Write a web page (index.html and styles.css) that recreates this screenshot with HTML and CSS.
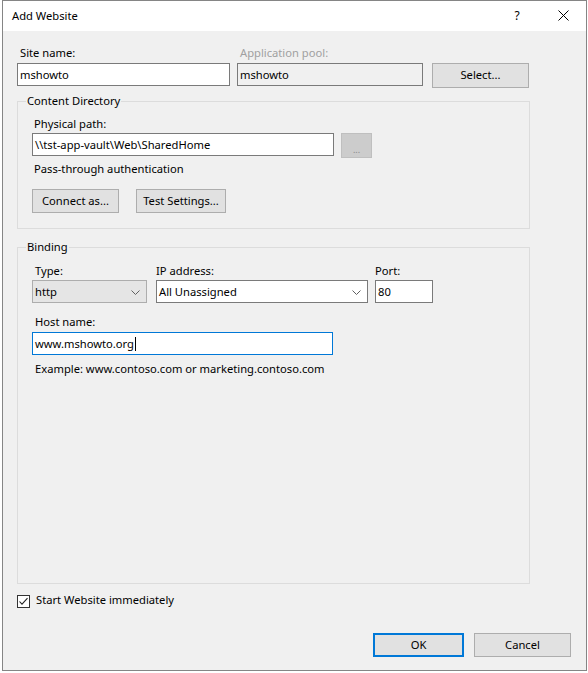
FILE: index.html
```html
<!DOCTYPE html>
<html>
<head>
<meta charset="utf-8">
<title>Add Website</title>
<link rel="stylesheet" href="styles.css">
</head>
<body>
<div class="dialog">
  <div class="titlebar">
    <span class="title">Add Website</span>
    <span class="help">?</span>
    <span class="close"><svg width="11" height="11" viewBox="0 0 11 11"><path d="M0.5 0.5L10.5 10.5M10.5 0.5L0.5 10.5" stroke="#000" stroke-width="1" fill="none"/></svg></span>
  </div>
  <div class="body">
    <div class="row-top">
      <div class="f-site">
        <div class="lbl lbl-top">Site name:</div>
        <div class="tb">mshowto</div>
      </div>
      <div class="f-pool">
        <div class="lbl lbl-top disabled">Application pool:</div>
        <div class="tb ro">mshowto</div>
      </div>
      <button class="btn btn-select">Select...</button>
    </div>

    <fieldset class="group group-content">
      <legend>Content Directory</legend>
      <div class="content-inner">
        <div class="lbl lbl-path">Physical path:</div>
        <div class="path-row">
          <div class="tb tb-path">\\tst-app-vault\Web\SharedHome</div>
          <button class="btn btn-browse" disabled>...</button>
        </div>
        <div class="text passthru">Pass-through authentication</div>
        <div class="btn-row">
          <button class="btn btn-connect">Connect as...</button>
          <button class="btn btn-test">Test Settings...</button>
        </div>
      </div>
    </fieldset>

    <fieldset class="group group-binding">
      <legend>Binding</legend>
      <div class="binding-inner">
        <div class="bind-row">
          <div class="col-type">
            <div class="lbl lbl-bind ind3">Type:</div>
            <div class="combo combo-type"><span class="combo-text">http</span><svg class="chev" width="9" height="5" viewBox="0 0 9 5"><path d="M0.5 0.5L4.5 4.5L8.5 0.5" stroke="#606060" fill="none"/></svg></div>
          </div>
          <div class="col-ip">
            <div class="lbl lbl-bind">IP address:</div>
            <div class="combo"><span class="combo-text">All Unassigned</span><svg class="chev" width="9" height="5" viewBox="0 0 9 5"><path d="M0.5 0.5L4.5 4.5L8.5 0.5" stroke="#606060" fill="none"/></svg></div>
          </div>
          <div class="col-port">
            <div class="lbl lbl-bind">Port:</div>
            <div class="tb">80</div>
          </div>
        </div>
        <div class="lbl lbl-host ind3">Host name:</div>
        <div class="tb tb-host">www.mshowto.org<span class="caret"></span></div>
        <div class="text example ind3">Example: www.contoso.com or marketing.contoso.com</div>
      </div>
    </fieldset>

    <div class="check-row">
      <svg class="checkbox" width="13" height="13" viewBox="0 0 13 13"><rect x="0.5" y="0.5" width="12" height="12" fill="#fff" stroke="#333"/><path d="M2.5 6.5L5 9.2L10.5 3.2" stroke="#222" stroke-width="1.1" fill="none"/></svg>
      <span class="check-label">Start Website immediately</span>
    </div>

    <div class="footer">
      <button class="btn btn-ok">OK</button>
      <button class="btn btn-cancel">Cancel</button>
    </div>
  </div>
</div>
</body>
</html>
```

FILE: styles.css
```css
* {
  box-sizing: border-box;
}

html,
body {
  margin: 0;
  background: #ffffff;
}

body {
  font-family: "Noto Sans", "DejaVu Sans", sans-serif;
  font-size: 11.2px;
  color: #000000;
}

.dialog {
  margin-left: 2px;
  width: 585px;
  height: 671px;
  border: 1px solid #858585;
  background: #f0f0f0;
  display: flex;
  flex-direction: column;
}

.titlebar {
  flex: none;
  height: 30px;
  background: #ffffff;
  display: flex;
  align-items: center;
  padding-left: 9px;
  padding-bottom: 2px;
}

.title {
  flex: 1;
}

.help {
  width: 12px;
  text-align: center;
  font-size: 12px;
  margin-right: 35px;
}

.close {
  width: 11px;
  height: 11px;
  margin-right: 17px;
  display: flex;
}

.body {
  flex: 1;
  display: flex;
  flex-direction: column;
  padding: 14px 15px 13px 14px;
  min-height: 0;
}

.lbl {
  line-height: 15px;
  height: 15px;
  white-space: nowrap;
  padding-left: 3px;
}

.lbl-top {
  margin-bottom: 3px;
}

.disabled {
  color: #a0a0a0;
}

.row-top {
  display: flex;
  align-items: flex-start;
}

.f-site {
  width: 213px;
}

.f-pool {
  width: 186px;
  margin-left: 7px;
}

.tb {
  height: 23px;
  border: 1px solid #7a7a7a;
  background: #ffffff;
  line-height: 21px;
  padding-left: 2px;
  white-space: nowrap;
  overflow: hidden;
}

.tb.ro {
  background: #f0f0f0;
}

.btn {
  font: inherit;
  color: #000000;
  background: #e1e1e1;
  border: 1px solid #adadad;
  padding: 0 0 2px 0;
  height: 24px;
  margin: 0;
}

.btn-select {
  width: 97px;
  height: 25px;
  margin-top: 18px;
  margin-left: 9px;
}

.group {
  margin: 0;
  padding: 0;
  border: 1px solid #dcdcdc;
  width: 513px;
  min-width: 0;
}

.group legend {
  padding: 0 1px 2px 1px;
  margin-left: 8px;
  line-height: 13px;
}

.group-content {
  margin-top: 6px;
}

.content-inner {
  padding: 7px 14px 15px 14px;
}

.lbl-path {
  padding-left: 2px;
  margin-bottom: 2px;
}

.path-row {
  display: flex;
  align-items: flex-start;
}

.tb-path {
  width: 302px;
}

.btn-browse {
  width: 31px;
  height: 25px;
  margin-left: 7px;
  background: #cccccc;
  border-color: #bfbfbf;
  color: #8a8a8a;
  font-size: 9px;
  line-height: 25px;
  padding: 3px 0 0 0;
}

.text {
  line-height: 13px;
  padding-bottom: 2px;
  white-space: nowrap;
}

.passthru {
  margin-top: 4px;
  padding-left: 2px;
}

.btn-row {
  display: flex;
  margin-top: 12px;
}

.btn-connect {
  width: 87px;
}

.btn-test {
  width: 90px;
  margin-left: 17px;
}

.group-binding {
  margin-top: 11px;
  flex: 1;
  min-height: 0;
}

.binding-inner {
  padding: 8px 14px 0 14px;
}

.bind-row {
  display: flex;
}

.lbl-bind {
  margin-bottom: 2px;
  padding-left: 0;
}

.ind3 {
  padding-left: 3px;
}

.col-type {
  width: 115px;
}

.col-ip {
  width: 212px;
  margin-left: 9px;
}

.col-port {
  width: 58px;
  margin-left: 7px;
}

.col-port .tb {
  padding-left: 2px;
}

.combo {
  height: 23px;
  border: 1px solid #7a7a7a;
  background: #ffffff;
  display: flex;
  align-items: center;
  padding-left: 2px;
  padding-right: 6px;
}

.combo-type {
  background: #e5e5e5;
  border-color: #adadad;
}

.combo-text {
  flex: 1;
  line-height: 21px;
  white-space: nowrap;
}

.chev {
  display: block;
  margin-top: 1px;
}

.lbl-host {
  margin-top: 11px;
  margin-bottom: 3px;
}

.tb-host {
  width: 301px;
  border-color: #0078d7;
}

.caret {
  display: inline-block;
  width: 1px;
  height: 14px;
  background: #000000;
  vertical-align: middle;
  margin-left: 1px;
  position: relative;
  top: -1px;
}

.example {
  margin-top: 7px;
}

.check-row {
  display: flex;
  align-items: center;
  height: 15px;
  margin-top: 9px;
}

.checkbox {
  display: block;
  margin-right: 6px;
  margin-top: 1px;
}

.check-label {
  line-height: 13px;
  padding-bottom: 2px;
  white-space: nowrap;
}

.footer {
  display: flex;
  justify-content: flex-end;
  margin-top: 25px;
}

.btn-ok {
  width: 91px;
  border: 2px solid #0078d7;
}

.btn-cancel {
  width: 97px;
  margin-left: 10px;
}
```
